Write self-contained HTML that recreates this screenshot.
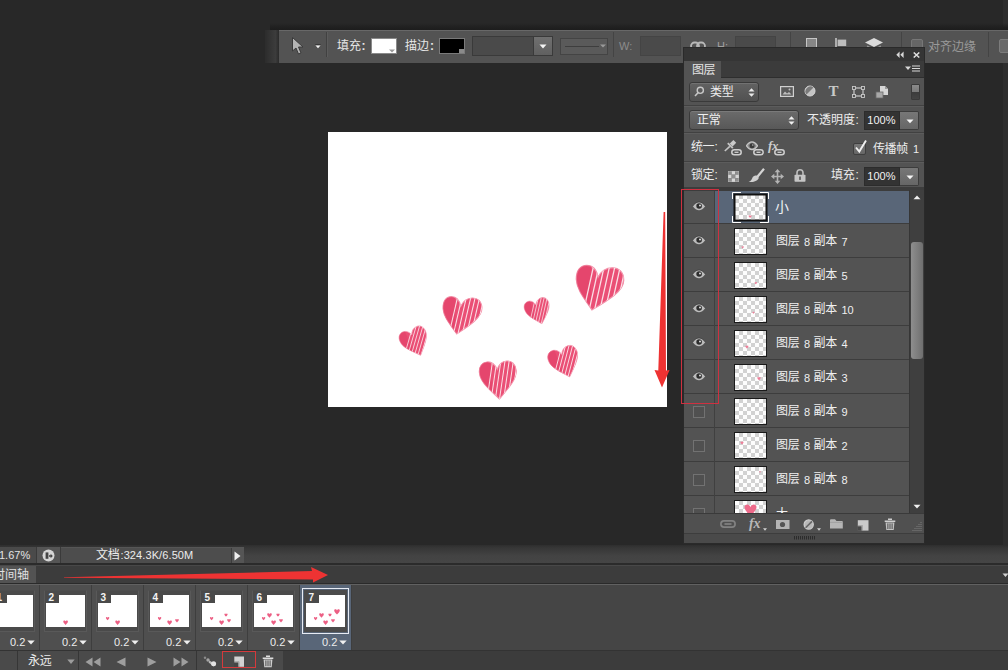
<!DOCTYPE html>
<html lang="zh"><head><meta charset="utf-8"><title>Photoshop</title><style>
html,body{margin:0;padding:0}
body{width:1008px;height:670px;overflow:hidden;background:#282828;position:relative;font-family:"Liberation Sans",sans-serif;font-size:11px;color:#dcdcdc}
body div,body>svg,.t,.rows svg,.rows span{position:absolute;box-sizing:border-box}
.t{white-space:nowrap;line-height:1}
.cj{font-family:"Liberation Sans","Noto Sans CJK SC",sans-serif;font-size:12px;line-height:14px}
.rows{overflow:hidden}
</style></head><body>
<div style="left:1003px;top:0px;width:5px;height:546px;background:#2e2e2e"></div>
<div style="left:270px;top:23px;width:738px;height:7px;background:linear-gradient(rgba(30,30,30,0),#1f1f1f 70%,#1d1d1d)"></div>
<div style="left:265px;top:30px;width:14px;height:33px;background:linear-gradient(90deg,#2c2c2c 0,#3c3c3c 75%,#2a2a2a 100%)"></div>
<div style="left:279px;top:30px;width:729px;height:33px;background:#535353;border-top:1px solid #686868"></div>
<svg style="left:290px;top:36px" width="15" height="20" viewBox="0 0 15 20" ><path d="M2.5 1.5 L2.5 15 L6 12 L8.5 18 L11 17 L8.5 11 L13 11 Z" fill="#b4b4b4" stroke="#3a3a3a" stroke-width="1"/></svg>
<svg style="left:315px;top:44px" width="6" height="5" viewBox="0 0 6 5" ><path d="M0.3 1.2 L5.7 1.2 L3 4.3 Z" fill="#f4f4f4"/><path d="M0.3 0.7 H5.7" stroke="#333" stroke-width="1"/></svg>
<div style="left:326px;top:32px;width:1px;height:25px;background:#414141"></div>
<div style="left:327px;top:32px;width:1px;height:25px;background:#5c5c5c"></div>
<span class="t cj" style="left:337px;top:39px;color:#e6e6e6">填充</span>
<span class="t" style="left:361.5px;top:40px;font-size:12px;font-weight:bold;color:#e6e6e6">:</span>
<div style="left:371px;top:38px;width:26px;height:16px;background:#fff;border:1px solid #8a8a8a"></div>
<svg style="left:389px;top:49px" width="6" height="4" viewBox="0 0 6 4" ><path d="M0 0.5 H6 L3 3.5 Z" fill="#999"/></svg>
<span class="t cj" style="left:405px;top:39px;color:#e6e6e6">描边</span>
<span class="t" style="left:430px;top:40px;font-size:12px;font-weight:bold;color:#e6e6e6">:</span>
<div style="left:439px;top:38px;width:26px;height:16px;background:#000;border:1px solid #7a7a7a"></div>
<div style="left:459px;top:49px;width:5px;height:4px;background:#8a8a8a"></div>
<div style="left:472px;top:36px;width:62px;height:20px;background:#4a4a4a;border:1px solid #3a3a3a"></div>
<div style="left:533px;top:36px;width:20px;height:20px;background:linear-gradient(#707070,#606060);border:1px solid #3a3a3a"></div>
<svg style="left:539px;top:44px" width="8" height="5" viewBox="0 0 8 5" ><path d="M0.5 0.5 H7.5 L4 4.5 Z" fill="#f4f4f4"/></svg>
<div style="left:560px;top:38px;width:48px;height:17px;background:#5a5a5a;border:1px solid #444"></div>
<div style="left:565px;top:46px;width:34px;height:1px;background:#3e3e3e"></div>
<svg style="left:600px;top:44px" width="6" height="4" viewBox="0 0 6 4" ><path d="M0 0.5 H6 L3 3.5 Z" fill="#999"/></svg>
<div style="left:613px;top:32px;width:1px;height:25px;background:#444"></div>
<span class="t" style="left:619px;top:41px;font-size:11px;color:#8c8c8c">W:</span>
<div style="left:640px;top:36px;width:41px;height:20px;background:#4a4a4a;border:1px solid #444"></div>
<svg style="left:690px;top:40px" width="16" height="12" viewBox="0 0 16 12" ><rect x="1" y="2.5" width="8" height="7" rx="3.5" fill="none" stroke="#b8b8b8" stroke-width="1.8"/><rect x="7" y="2.5" width="8" height="7" rx="3.5" fill="none" stroke="#b8b8b8" stroke-width="1.8"/></svg>
<span class="t" style="left:717px;top:41px;font-size:11px;color:#a0a0a0">H:</span>
<div style="left:735px;top:36px;width:41px;height:20px;background:#4a4a4a;border:1px solid #444"></div>
<div style="left:790px;top:32px;width:1px;height:25px;background:#444"></div>
<div style="left:806px;top:38px;width:11px;height:13px;background:#868686;border:1px solid #c6c6c6"></div>
<svg style="left:835px;top:38px" width="12" height="13" viewBox="0 0 12 13" ><path d="M1 0 V13" stroke="#d4d4d4" stroke-width="1.4"/><rect x="2.6" y="1.6" width="8.6" height="6.4" fill="#bdbdbd"/></svg>
<svg style="left:864px;top:38px" width="20" height="12" viewBox="0 0 20 12" ><path d="M10 0 L19 4.5 L10 9 L1 4.5 Z" fill="#dadada"/><path d="M3 8 L10 11.5 L17 8" fill="none" stroke="#999" stroke-width="1.2"/></svg>
<div style="left:901px;top:32px;width:1px;height:25px;background:#444"></div>
<div style="left:911px;top:39px;width:12px;height:12px;background:#666;border:1px solid #777;border-radius:2px"></div>
<span class="t cj" style="left:928px;top:40px;color:#9a9a9a">对齐边缘</span>
<div style="left:988px;top:32px;width:1px;height:25px;background:#444"></div>
<div style="left:999px;top:39px;width:12px;height:14px;background:#6a6a6a;border:1px solid #7c7c7c;border-radius:2px"></div>
<div style="left:328px;top:132px;width:339px;height:275px;background:#fff"></div>
<svg style="left:328px;top:132px" width="339" height="275" viewBox="328 132 339 275" ><g transform="translate(415.3,342) rotate(-24) scale(0.275,0.316667) translate(-50,-45)"><clipPath id="hca"><path d="M48 90 C22 64 0 46 0 24 C0 8 11 0 23 0 C36 0 45 9 49 20 C54 9 64 2 77 2 C90 2 100 11 100 26 C100 46 78 64 48 90 Z"/></clipPath><path d="M48 90 C22 64 0 46 0 24 C0 8 11 0 23 0 C36 0 45 9 49 20 C54 9 64 2 77 2 C90 2 100 11 100 26 C100 46 78 64 48 90 Z" fill="#ea4f75" stroke="#f391a9" stroke-width="2.5"/><g clip-path="url(#hca)"><rect x="-5" y="-5" width="36" height="100" fill="#e03c64" opacity="0.45"/><g transform="rotate(44 50 45)"><path d="M27 -40 V140" stroke="#fff" stroke-opacity="0.82" stroke-width="2.7"/><path d="M38 -40 V140" stroke="#fff" stroke-opacity="0.82" stroke-width="2.7"/><path d="M49 -40 V140" stroke="#fff" stroke-opacity="0.82" stroke-width="2.7"/><path d="M60 -40 V140" stroke="#fff" stroke-opacity="0.82" stroke-width="2.7"/><path d="M71 -40 V140" stroke="#fff" stroke-opacity="0.82" stroke-width="2.7"/><path d="M82 -40 V140" stroke="#fff" stroke-opacity="0.82" stroke-width="2.7"/><path d="M93 -40 V140" stroke="#fff" stroke-opacity="0.82" stroke-width="2.7"/><path d="M104 -40 V140" stroke="#fff" stroke-opacity="0.82" stroke-width="2.7"/><path d="M115 -40 V140" stroke="#fff" stroke-opacity="0.82" stroke-width="2.7"/><path d="M126 -40 V140" stroke="#fff" stroke-opacity="0.82" stroke-width="2.7"/><path d="M137 -40 V140" stroke="#fff" stroke-opacity="0.82" stroke-width="2.7"/><path d="M148 -40 V140" stroke="#fff" stroke-opacity="0.82" stroke-width="2.7"/></g></g></g><g transform="translate(462.7,315) rotate(-2) scale(0.39,0.416667) translate(-50,-45)"><clipPath id="hcb"><path d="M33 90 C18 68 1 50 0 28 C0 10 9 0 22 0 C34 0 43 9 46 24 C52 12 63 5 76 5 C90 5 100 14 100 30 C100 52 68 70 33 90 Z"/></clipPath><path d="M33 90 C18 68 1 50 0 28 C0 10 9 0 22 0 C34 0 43 9 46 24 C52 12 63 5 76 5 C90 5 100 14 100 30 C100 52 68 70 33 90 Z" fill="#ea4f75" stroke="#f391a9" stroke-width="2.5"/><g clip-path="url(#hcb)"><rect x="-5" y="-5" width="36" height="100" fill="#e03c64" opacity="0.45"/><g transform="rotate(16 50 45)"><path d="M27 -40 V140" stroke="#fff" stroke-opacity="0.82" stroke-width="2.7"/><path d="M38 -40 V140" stroke="#fff" stroke-opacity="0.82" stroke-width="2.7"/><path d="M49 -40 V140" stroke="#fff" stroke-opacity="0.82" stroke-width="2.7"/><path d="M60 -40 V140" stroke="#fff" stroke-opacity="0.82" stroke-width="2.7"/><path d="M71 -40 V140" stroke="#fff" stroke-opacity="0.82" stroke-width="2.7"/><path d="M82 -40 V140" stroke="#fff" stroke-opacity="0.82" stroke-width="2.7"/><path d="M93 -40 V140" stroke="#fff" stroke-opacity="0.82" stroke-width="2.7"/><path d="M104 -40 V140" stroke="#fff" stroke-opacity="0.82" stroke-width="2.7"/><path d="M115 -40 V140" stroke="#fff" stroke-opacity="0.82" stroke-width="2.7"/><path d="M126 -40 V140" stroke="#fff" stroke-opacity="0.82" stroke-width="2.7"/><path d="M137 -40 V140" stroke="#fff" stroke-opacity="0.82" stroke-width="2.7"/><path d="M148 -40 V140" stroke="#fff" stroke-opacity="0.82" stroke-width="2.7"/></g></g></g><g transform="translate(538.4,311.5) rotate(-18) scale(0.25,0.283333) translate(-50,-45)"><clipPath id="hcc"><path d="M48 90 C22 64 0 46 0 24 C0 8 11 0 23 0 C36 0 45 9 49 20 C54 9 64 2 77 2 C90 2 100 11 100 26 C100 46 78 64 48 90 Z"/></clipPath><path d="M48 90 C22 64 0 46 0 24 C0 8 11 0 23 0 C36 0 45 9 49 20 C54 9 64 2 77 2 C90 2 100 11 100 26 C100 46 78 64 48 90 Z" fill="#ea4f75" stroke="#f391a9" stroke-width="2.5"/><g clip-path="url(#hcc)"><rect x="-5" y="-5" width="36" height="100" fill="#e03c64" opacity="0.45"/><g transform="rotate(34 50 45)"><path d="M27 -40 V140" stroke="#fff" stroke-opacity="0.82" stroke-width="2.7"/><path d="M38 -40 V140" stroke="#fff" stroke-opacity="0.82" stroke-width="2.7"/><path d="M49 -40 V140" stroke="#fff" stroke-opacity="0.82" stroke-width="2.7"/><path d="M60 -40 V140" stroke="#fff" stroke-opacity="0.82" stroke-width="2.7"/><path d="M71 -40 V140" stroke="#fff" stroke-opacity="0.82" stroke-width="2.7"/><path d="M82 -40 V140" stroke="#fff" stroke-opacity="0.82" stroke-width="2.7"/><path d="M93 -40 V140" stroke="#fff" stroke-opacity="0.82" stroke-width="2.7"/><path d="M104 -40 V140" stroke="#fff" stroke-opacity="0.82" stroke-width="2.7"/><path d="M115 -40 V140" stroke="#fff" stroke-opacity="0.82" stroke-width="2.7"/><path d="M126 -40 V140" stroke="#fff" stroke-opacity="0.82" stroke-width="2.7"/><path d="M137 -40 V140" stroke="#fff" stroke-opacity="0.82" stroke-width="2.7"/><path d="M148 -40 V140" stroke="#fff" stroke-opacity="0.82" stroke-width="2.7"/></g></g></g><g transform="translate(600,287.6) rotate(0) scale(0.475,0.494444) translate(-50,-45)"><clipPath id="hcd"><path d="M33 90 C18 68 1 50 0 28 C0 10 9 0 22 0 C34 0 43 9 46 24 C52 12 63 5 76 5 C90 5 100 14 100 30 C100 52 68 70 33 90 Z"/></clipPath><path d="M33 90 C18 68 1 50 0 28 C0 10 9 0 22 0 C34 0 43 9 46 24 C52 12 63 5 76 5 C90 5 100 14 100 30 C100 52 68 70 33 90 Z" fill="#ea4f75" stroke="#f391a9" stroke-width="2.5"/><g clip-path="url(#hcd)"><rect x="-5" y="-5" width="36" height="100" fill="#e03c64" opacity="0.45"/><g transform="rotate(13 50 45)"><path d="M27 -40 V140" stroke="#fff" stroke-opacity="0.82" stroke-width="2.7"/><path d="M38 -40 V140" stroke="#fff" stroke-opacity="0.82" stroke-width="2.7"/><path d="M49 -40 V140" stroke="#fff" stroke-opacity="0.82" stroke-width="2.7"/><path d="M60 -40 V140" stroke="#fff" stroke-opacity="0.82" stroke-width="2.7"/><path d="M71 -40 V140" stroke="#fff" stroke-opacity="0.82" stroke-width="2.7"/><path d="M82 -40 V140" stroke="#fff" stroke-opacity="0.82" stroke-width="2.7"/><path d="M93 -40 V140" stroke="#fff" stroke-opacity="0.82" stroke-width="2.7"/><path d="M104 -40 V140" stroke="#fff" stroke-opacity="0.82" stroke-width="2.7"/><path d="M115 -40 V140" stroke="#fff" stroke-opacity="0.82" stroke-width="2.7"/><path d="M126 -40 V140" stroke="#fff" stroke-opacity="0.82" stroke-width="2.7"/><path d="M137 -40 V140" stroke="#fff" stroke-opacity="0.82" stroke-width="2.7"/><path d="M148 -40 V140" stroke="#fff" stroke-opacity="0.82" stroke-width="2.7"/></g></g></g><g transform="translate(498.5,380) rotate(-5) scale(0.37,0.422222) translate(-50,-45)"><clipPath id="hce"><path d="M48 90 C22 64 0 46 0 24 C0 8 11 0 23 0 C36 0 45 9 49 20 C54 9 64 2 77 2 C90 2 100 11 100 26 C100 46 78 64 48 90 Z"/></clipPath><path d="M48 90 C22 64 0 46 0 24 C0 8 11 0 23 0 C36 0 45 9 49 20 C54 9 64 2 77 2 C90 2 100 11 100 26 C100 46 78 64 48 90 Z" fill="#ea4f75" stroke="#f391a9" stroke-width="2.5"/><g clip-path="url(#hce)"><rect x="-5" y="-5" width="36" height="100" fill="#e03c64" opacity="0.45"/><g transform="rotate(15 50 45)"><path d="M27 -40 V140" stroke="#fff" stroke-opacity="0.82" stroke-width="2.7"/><path d="M38 -40 V140" stroke="#fff" stroke-opacity="0.82" stroke-width="2.7"/><path d="M49 -40 V140" stroke="#fff" stroke-opacity="0.82" stroke-width="2.7"/><path d="M60 -40 V140" stroke="#fff" stroke-opacity="0.82" stroke-width="2.7"/><path d="M71 -40 V140" stroke="#fff" stroke-opacity="0.82" stroke-width="2.7"/><path d="M82 -40 V140" stroke="#fff" stroke-opacity="0.82" stroke-width="2.7"/><path d="M93 -40 V140" stroke="#fff" stroke-opacity="0.82" stroke-width="2.7"/><path d="M104 -40 V140" stroke="#fff" stroke-opacity="0.82" stroke-width="2.7"/><path d="M115 -40 V140" stroke="#fff" stroke-opacity="0.82" stroke-width="2.7"/><path d="M126 -40 V140" stroke="#fff" stroke-opacity="0.82" stroke-width="2.7"/><path d="M137 -40 V140" stroke="#fff" stroke-opacity="0.82" stroke-width="2.7"/><path d="M148 -40 V140" stroke="#fff" stroke-opacity="0.82" stroke-width="2.7"/></g></g></g><g transform="translate(565,362.3) rotate(-20) scale(0.3,0.338889) translate(-50,-45)"><clipPath id="hcf"><path d="M48 90 C22 64 0 46 0 24 C0 8 11 0 23 0 C36 0 45 9 49 20 C54 9 64 2 77 2 C90 2 100 11 100 26 C100 46 78 64 48 90 Z"/></clipPath><path d="M48 90 C22 64 0 46 0 24 C0 8 11 0 23 0 C36 0 45 9 49 20 C54 9 64 2 77 2 C90 2 100 11 100 26 C100 46 78 64 48 90 Z" fill="#ea4f75" stroke="#f391a9" stroke-width="2.5"/><g clip-path="url(#hcf)"><rect x="-5" y="-5" width="36" height="100" fill="#e03c64" opacity="0.45"/><g transform="rotate(38 50 45)"><path d="M27 -40 V140" stroke="#fff" stroke-opacity="0.82" stroke-width="2.7"/><path d="M38 -40 V140" stroke="#fff" stroke-opacity="0.82" stroke-width="2.7"/><path d="M49 -40 V140" stroke="#fff" stroke-opacity="0.82" stroke-width="2.7"/><path d="M60 -40 V140" stroke="#fff" stroke-opacity="0.82" stroke-width="2.7"/><path d="M71 -40 V140" stroke="#fff" stroke-opacity="0.82" stroke-width="2.7"/><path d="M82 -40 V140" stroke="#fff" stroke-opacity="0.82" stroke-width="2.7"/><path d="M93 -40 V140" stroke="#fff" stroke-opacity="0.82" stroke-width="2.7"/><path d="M104 -40 V140" stroke="#fff" stroke-opacity="0.82" stroke-width="2.7"/><path d="M115 -40 V140" stroke="#fff" stroke-opacity="0.82" stroke-width="2.7"/><path d="M126 -40 V140" stroke="#fff" stroke-opacity="0.82" stroke-width="2.7"/><path d="M137 -40 V140" stroke="#fff" stroke-opacity="0.82" stroke-width="2.7"/><path d="M148 -40 V140" stroke="#fff" stroke-opacity="0.82" stroke-width="2.7"/></g></g></g></svg>
<svg style="left:650px;top:208px" width="24" height="184" viewBox="0 0 24 184" ><path d="M13.6 4 L15.2 4 L16 162.5 L19.6 162 L12 179.5 L4.5 162 L8.3 162.5 Z" fill="#ee3232"/></svg>
<div style="left:683px;top:47px;width:242px;height:497px;background:#535353;border:1px solid #2a2a2a"></div>
<div style="left:684px;top:48px;width:240px;height:13px;background:#353535"></div>
<div style="left:684px;top:61px;width:240px;height:17px;background:#3b3b3b;border-bottom:1px solid #2e2e2e"></div>
<div style="left:684px;top:61px;width:37px;height:18px;background:#535353"></div>
<svg style="left:896px;top:51px" width="8" height="8" viewBox="0 0 8 8" ><path d="M3.6 0.5 V7 L0.3 3.75 Z M7.6 0.5 V7 L4.3 3.75 Z" fill="#d8d8d8"/></svg>
<svg style="left:913px;top:52px" width="7" height="6" viewBox="0 0 7 6" ><path d="M0.7 0.5 L6.3 5.5 M6.3 0.5 L0.7 5.5" stroke="#e0e0e0" stroke-width="1.5"/></svg>
<span class="t cj" style="left:692px;top:63px;color:#e4e4e4;letter-spacing:-0.5px">图层</span>
<svg style="left:905px;top:65px" width="16" height="8" viewBox="0 0 16 8" ><path d="M0 1.5 H6 L3 5 Z" fill="#d8d8d8"/><path d="M7 1 H15 M7 3.5 H15 M7 6 H15" stroke="#d8d8d8" stroke-width="1.2"/></svg>
<div style="left:689px;top:82px;width:70px;height:20px;background:linear-gradient(#626262,#515151);border:1px solid #3a3a3a;border-radius:3px;box-shadow:inset 0 1px 0 #727272"></div>
<svg style="left:694px;top:86px" width="11" height="11" viewBox="0 0 11 11" ><circle cx="6.3" cy="4.3" r="3.1" fill="none" stroke="#c8c8c8" stroke-width="1.4"/><path d="M4 6.8 L1 10" stroke="#c8c8c8" stroke-width="1.6"/></svg>
<span class="t cj" style="left:710px;top:85px;color:#ececec;letter-spacing:-0.3px">类型</span>
<svg style="left:748px;top:88px" width="7" height="9" viewBox="0 0 7 9" ><path d="M3.5 0.3 L6.5 3.6 H0.5 Z M3.5 8.7 L6.5 5.4 H0.5 Z" fill="#e8e8e8"/></svg>
<svg style="left:780px;top:86px" width="14" height="11" viewBox="0 0 14 11" ><rect x="0.6" y="0.6" width="12.8" height="9.8" fill="#5a5a5a" stroke="#d0d0d0" stroke-width="1.2"/><path d="M2.5 8.5 L5 5.5 L7 7.5 L9 6 L11.5 8.5 Z" fill="#bdbdbd"/><circle cx="9.5" cy="3.5" r="1" fill="#bdbdbd"/></svg>
<svg style="left:804px;top:85px" width="12" height="12" viewBox="0 0 12 12" ><circle cx="6" cy="6" r="5" fill="#c4c4c4" stroke="#d8d8d8" stroke-width="1"/><path d="M2.5 9.5 A5 5 0 0 1 9.5 2.5 Z" fill="#7a7a7a"/></svg>
<span class="t" style="left:828.5px;top:84px;font-family:'Liberation Serif',serif;font-weight:bold;font-size:15px;color:#c9c9c9">T</span>
<svg style="left:852px;top:86px" width="13" height="12" viewBox="0 0 13 12" ><rect x="2" y="2" width="9" height="8" fill="none" stroke="#c8c8c8" stroke-width="1.2"/><g fill="#535353" stroke="#c8c8c8" stroke-width="0.9"><rect x="0.5" y="0.5" width="3" height="3"/><rect x="9.5" y="0.5" width="3" height="3"/><rect x="0.5" y="8.5" width="3" height="3"/><rect x="9.5" y="8.5" width="3" height="3"/></g></svg>
<svg style="left:875px;top:85px" width="14" height="14" viewBox="0 0 14 14" ><path d="M5 1 H10 L13 4 V10 H5 Z" fill="#d6d6d6"/><path d="M10 1 V4 H13" fill="#9a9a9a"/><rect x="1" y="7" width="7" height="6" fill="#a8a8a8" stroke="#6a6a6a" stroke-width="0.8"/></svg>
<div style="left:911px;top:84px;width:9px;height:16px;background:linear-gradient(#8a8a8a 0,#7a7a7a 48%,#3c3c3c 52%,#444 100%);border:1px solid #3a3a3a;border-radius:1px"></div>
<div style="left:684px;top:105px;width:240px;height:1px;background:#414141"></div>
<div style="left:684px;top:106px;width:240px;height:1px;background:#5c5c5c"></div>
<div style="left:689px;top:110px;width:110px;height:20px;background:linear-gradient(#6b6b6b,#585858);border:1px solid #3a3a3a;border-radius:3px;box-shadow:inset 0 1px 0 #7a7a7a"></div>
<span class="t cj" style="left:697px;top:113px;color:#f0f0f0;letter-spacing:-0.3px">正常</span>
<svg style="left:788px;top:116px" width="7" height="9" viewBox="0 0 7 9" ><path d="M3.5 0.3 L6.5 3.6 H0.5 Z M3.5 8.7 L6.5 5.4 H0.5 Z" fill="#f0f0f0"/></svg>
<span class="t cj" style="left:807px;top:113px;color:#ececec">不透明度</span>
<span class="t" style="left:855.5px;top:114px;font-size:12px;color:#ececec">:</span>
<div style="left:864px;top:111px;width:36px;height:19px;background:#333;border:1px solid #2c2c2c"></div>
<span class="t" style="left:867.3px;top:115px;font-size:11px;color:#f2f2f2">100%</span>
<div style="left:900px;top:111px;width:19px;height:19px;background:linear-gradient(#777,#666);border:1px solid #3c3c3c;border-left:none;border-radius:0 2px 2px 0"></div>
<svg style="left:906px;top:119px" width="8" height="5" viewBox="0 0 8 5" ><path d="M0.5 0.5 H7.5 L4 4.3 Z" fill="#f6f6f6"/></svg>
<div style="left:684px;top:132px;width:240px;height:1px;background:#414141"></div>
<div style="left:684px;top:133px;width:240px;height:1px;background:#5c5c5c"></div>
<span class="t cj" style="left:691px;top:140px;color:#ececec;letter-spacing:-0.4px">统一</span>
<span class="t" style="left:714.5px;top:141px;font-size:12px;color:#ececec">:</span>
<div style="left:853px;top:143px;width:13px;height:12px;background:linear-gradient(#777,#666);border:1px solid #3f3f3f;border-radius:2px"></div>
<svg style="left:853px;top:139px" width="16" height="16" viewBox="0 0 16 16" ><path d="M3 8.5 L6.3 12.5 L13 1.5" fill="none" stroke="#f2f2f2" stroke-width="1.9"/></svg>
<span class="t cj" style="left:873px;top:142px;color:#ececec;letter-spacing:-0.4px">传播帧</span>
<span class="t" style="left:913px;top:144px;font-size:11px;color:#ececec">1</span>
<div style="left:684px;top:161px;width:240px;height:1px;background:#414141"></div>
<div style="left:684px;top:162px;width:240px;height:1px;background:#5c5c5c"></div>
<span class="t cj" style="left:691px;top:168px;color:#ececec;letter-spacing:-0.4px">锁定</span>
<span class="t" style="left:714.5px;top:169px;font-size:12px;color:#ececec">:</span>
<span class="t cj" style="left:831px;top:168px;color:#ececec;letter-spacing:-0.3px">填充</span>
<span class="t" style="left:855.5px;top:169px;font-size:12px;color:#ececec">:</span>
<div style="left:864px;top:167px;width:36px;height:19px;background:#333;border:1px solid #2c2c2c"></div>
<span class="t" style="left:867.3px;top:171px;font-size:11px;color:#f2f2f2">100%</span>
<div style="left:900px;top:167px;width:19px;height:19px;background:linear-gradient(#777,#666);border:1px solid #3c3c3c;border-left:none;border-radius:0 2px 2px 0"></div>
<svg style="left:906px;top:175px" width="8" height="5" viewBox="0 0 8 5" ><path d="M0.5 0.5 H7.5 L4 4.3 Z" fill="#f6f6f6"/></svg>
<div class="rows" style="left:684px;top:190px;width:225px;height:323px;"><div style="left:0;top:0px;width:225px;height:34px;border-bottom:1px solid #3d3d3d;background:#535353"></div><div style="left:31px;top:0px;width:194px;height:34px;background:#596678;border-bottom:1px solid #3d3d3d"></div><div style="left:30px;top:0px;width:1px;height:34px;background:#404040"></div><svg style="left:8px;top:11px" width="14" height="10" viewBox="0 0 14 10"><path d="M0.8 5.2 Q3.6 1.2 7 1.2 Q10.4 1.2 13.2 5.2 Q10.4 9.2 7 9.2 Q3.6 9.2 0.8 5.2 Z" fill="#bcbcbc"/><path d="M0.8 5 Q3.6 0.8 7 0.8 Q10.4 0.8 13.2 5" fill="none" stroke="#3a3a3a" stroke-width="0.8" opacity="0.7"/><circle cx="7.1" cy="5" r="2.8" fill="#2e2e2e"/><circle cx="8" cy="4.4" r="1" fill="#e0e0e0"/></svg><div style="left:50px;top:4px;width:33px;height:27px;border:1px solid #1a1a1a;background-color:#fdfdfd;background-image:linear-gradient(45deg,#d2d2d2 25%,transparent 25%,transparent 75%,#d2d2d2 75%),linear-gradient(45deg,#d2d2d2 25%,transparent 25%,transparent 75%,#d2d2d2 75%);background-size:8px 8px;background-position:0 0,4px 4px"></div><svg style="left:51px;top:5px" width="31" height="25" viewBox="0 0 31 25"><path d="M15.1 23.1 C14.05 22.05 13.6 21.45 13.6 20.85 C13.6 20.025 14.875 19.95 15.1 20.925 C15.325 19.95 16.6 20.025 16.6 20.85 C16.6 21.45 16.15 22.05 15.1 23.1 Z" fill="#ee7d98" opacity="1"/></svg><svg style="left:48px;top:2px" width="37" height="31" viewBox="0 0 37 31"><path d="M0.5 7 V0.5 H9 M28 0.5 H36.5 V7 M36.5 24 V30.5 H28 M9 30.5 H0.5 V24" fill="none" stroke="#fff" stroke-width="1"/><rect x="2.5" y="2.5" width="32" height="26" fill="none" stroke="#111" stroke-width="2"/></svg><span class="t cj" style="left:91px;top:9px;font-size:14px;line-height:16px;color:#eef0f4">小</span><div style="left:0;top:34px;width:225px;height:34px;border-bottom:1px solid #3d3d3d;background:#535353"></div><div style="left:30px;top:34px;width:1px;height:34px;background:#404040"></div><svg style="left:8px;top:45px" width="14" height="10" viewBox="0 0 14 10"><path d="M0.8 5.2 Q3.6 1.2 7 1.2 Q10.4 1.2 13.2 5.2 Q10.4 9.2 7 9.2 Q3.6 9.2 0.8 5.2 Z" fill="#bcbcbc"/><path d="M0.8 5 Q3.6 0.8 7 0.8 Q10.4 0.8 13.2 5" fill="none" stroke="#3a3a3a" stroke-width="0.8" opacity="0.7"/><circle cx="7.1" cy="5" r="2.8" fill="#2e2e2e"/><circle cx="8" cy="4.4" r="1" fill="#e0e0e0"/></svg><div style="left:50px;top:38px;width:33px;height:27px;border:1px solid #1a1a1a;background-color:#fdfdfd;background-image:linear-gradient(45deg,#d2d2d2 25%,transparent 25%,transparent 75%,#d2d2d2 75%),linear-gradient(45deg,#d2d2d2 25%,transparent 25%,transparent 75%,#d2d2d2 75%);background-size:8px 8px;background-position:0 0,4px 4px"></div><svg style="left:51px;top:39px" width="31" height="25" viewBox="0 0 31 25"><path d="M7.7 19.4 C6.93 18.63 6.6 18.19 6.6 17.75 C6.6 17.145 7.535 17.09 7.7 17.805 C7.865 17.09 8.8 17.145 8.8 17.75 C8.8 18.19 8.47 18.63 7.7 19.4 Z" fill="#ee7d98" opacity="1"/></svg><span class="t cj" style="left:92px;top:44px;color:#f0f0f0;letter-spacing:-0.2px">图层</span><span class="t" style="left:120px;top:47px;font-size:11px;color:#f0f0f0">8</span><span class="t cj" style="left:129.5px;top:44px;color:#f0f0f0;letter-spacing:-0.2px">副本</span><span class="t" style="left:157.5px;top:47px;font-size:11px;color:#f0f0f0">7</span><div style="left:0;top:68px;width:225px;height:34px;border-bottom:1px solid #3d3d3d;background:#535353"></div><div style="left:30px;top:68px;width:1px;height:34px;background:#404040"></div><svg style="left:8px;top:79px" width="14" height="10" viewBox="0 0 14 10"><path d="M0.8 5.2 Q3.6 1.2 7 1.2 Q10.4 1.2 13.2 5.2 Q10.4 9.2 7 9.2 Q3.6 9.2 0.8 5.2 Z" fill="#bcbcbc"/><path d="M0.8 5 Q3.6 0.8 7 0.8 Q10.4 0.8 13.2 5" fill="none" stroke="#3a3a3a" stroke-width="0.8" opacity="0.7"/><circle cx="7.1" cy="5" r="2.8" fill="#2e2e2e"/><circle cx="8" cy="4.4" r="1" fill="#e0e0e0"/></svg><div style="left:50px;top:72px;width:33px;height:27px;border:1px solid #1a1a1a;background-color:#fdfdfd;background-image:linear-gradient(45deg,#d2d2d2 25%,transparent 25%,transparent 75%,#d2d2d2 75%),linear-gradient(45deg,#d2d2d2 25%,transparent 25%,transparent 75%,#d2d2d2 75%);background-size:8px 8px;background-position:0 0,4px 4px"></div><svg style="left:51px;top:73px" width="31" height="25" viewBox="0 0 31 25"><path d="M20.8 21.2 C19.96 20.36 19.6 19.88 19.6 19.4 C19.6 18.74 20.62 18.68 20.8 19.46 C20.98 18.68 22 18.74 22 19.4 C22 19.88 21.64 20.36 20.8 21.2 Z" fill="#ee7d98" opacity="1"/></svg><span class="t cj" style="left:92px;top:78px;color:#f0f0f0;letter-spacing:-0.2px">图层</span><span class="t" style="left:120px;top:81px;font-size:11px;color:#f0f0f0">8</span><span class="t cj" style="left:129.5px;top:78px;color:#f0f0f0;letter-spacing:-0.2px">副本</span><span class="t" style="left:157.5px;top:81px;font-size:11px;color:#f0f0f0">5</span><div style="left:0;top:102px;width:225px;height:34px;border-bottom:1px solid #3d3d3d;background:#535353"></div><div style="left:30px;top:102px;width:1px;height:34px;background:#404040"></div><svg style="left:8px;top:113px" width="14" height="10" viewBox="0 0 14 10"><path d="M0.8 5.2 Q3.6 1.2 7 1.2 Q10.4 1.2 13.2 5.2 Q10.4 9.2 7 9.2 Q3.6 9.2 0.8 5.2 Z" fill="#bcbcbc"/><path d="M0.8 5 Q3.6 0.8 7 0.8 Q10.4 0.8 13.2 5" fill="none" stroke="#3a3a3a" stroke-width="0.8" opacity="0.7"/><circle cx="7.1" cy="5" r="2.8" fill="#2e2e2e"/><circle cx="8" cy="4.4" r="1" fill="#e0e0e0"/></svg><div style="left:50px;top:106px;width:33px;height:27px;border:1px solid #1a1a1a;background-color:#fdfdfd;background-image:linear-gradient(45deg,#d2d2d2 25%,transparent 25%,transparent 75%,#d2d2d2 75%),linear-gradient(45deg,#d2d2d2 25%,transparent 25%,transparent 75%,#d2d2d2 75%);background-size:8px 8px;background-position:0 0,4px 4px"></div><svg style="left:51px;top:107px" width="31" height="25" viewBox="0 0 31 25"><path d="M18.5 16.7 C17.8 16 17.5 15.6 17.5 15.2 C17.5 14.65 18.35 14.6 18.5 15.25 C18.65 14.6 19.5 14.65 19.5 15.2 C19.5 15.6 19.2 16 18.5 16.7 Z" fill="#ee7d98" opacity="1"/></svg><span class="t cj" style="left:92px;top:112px;color:#f0f0f0;letter-spacing:-0.2px">图层</span><span class="t" style="left:120px;top:115px;font-size:11px;color:#f0f0f0">8</span><span class="t cj" style="left:129.5px;top:112px;color:#f0f0f0;letter-spacing:-0.2px">副本</span><span class="t" style="left:157.5px;top:115px;font-size:11px;color:#f0f0f0">10</span><div style="left:0;top:136px;width:225px;height:34px;border-bottom:1px solid #3d3d3d;background:#535353"></div><div style="left:30px;top:136px;width:1px;height:34px;background:#404040"></div><svg style="left:8px;top:147px" width="14" height="10" viewBox="0 0 14 10"><path d="M0.8 5.2 Q3.6 1.2 7 1.2 Q10.4 1.2 13.2 5.2 Q10.4 9.2 7 9.2 Q3.6 9.2 0.8 5.2 Z" fill="#bcbcbc"/><path d="M0.8 5 Q3.6 0.8 7 0.8 Q10.4 0.8 13.2 5" fill="none" stroke="#3a3a3a" stroke-width="0.8" opacity="0.7"/><circle cx="7.1" cy="5" r="2.8" fill="#2e2e2e"/><circle cx="8" cy="4.4" r="1" fill="#e0e0e0"/></svg><div style="left:50px;top:140px;width:33px;height:27px;border:1px solid #1a1a1a;background-color:#fdfdfd;background-image:linear-gradient(45deg,#d2d2d2 25%,transparent 25%,transparent 75%,#d2d2d2 75%),linear-gradient(45deg,#d2d2d2 25%,transparent 25%,transparent 75%,#d2d2d2 75%);background-size:8px 8px;background-position:0 0,4px 4px"></div><svg style="left:51px;top:141px" width="31" height="25" viewBox="0 0 31 25"><path d="M11.9 17.5 C10.85 16.45 10.4 15.85 10.4 15.25 C10.4 14.425 11.675 14.35 11.9 15.325 C12.125 14.35 13.4 14.425 13.4 15.25 C13.4 15.85 12.95 16.45 11.9 17.5 Z" fill="#ee7d98" opacity="1"/></svg><span class="t cj" style="left:92px;top:146px;color:#f0f0f0;letter-spacing:-0.2px">图层</span><span class="t" style="left:120px;top:149px;font-size:11px;color:#f0f0f0">8</span><span class="t cj" style="left:129.5px;top:146px;color:#f0f0f0;letter-spacing:-0.2px">副本</span><span class="t" style="left:157.5px;top:149px;font-size:11px;color:#f0f0f0">4</span><div style="left:0;top:170px;width:225px;height:34px;border-bottom:1px solid #3d3d3d;background:#535353"></div><div style="left:30px;top:170px;width:1px;height:34px;background:#404040"></div><svg style="left:8px;top:181px" width="14" height="10" viewBox="0 0 14 10"><path d="M0.8 5.2 Q3.6 1.2 7 1.2 Q10.4 1.2 13.2 5.2 Q10.4 9.2 7 9.2 Q3.6 9.2 0.8 5.2 Z" fill="#bcbcbc"/><path d="M0.8 5 Q3.6 0.8 7 0.8 Q10.4 0.8 13.2 5" fill="none" stroke="#3a3a3a" stroke-width="0.8" opacity="0.7"/><circle cx="7.1" cy="5" r="2.8" fill="#2e2e2e"/><circle cx="8" cy="4.4" r="1" fill="#e0e0e0"/></svg><div style="left:50px;top:174px;width:33px;height:27px;border:1px solid #1a1a1a;background-color:#fdfdfd;background-image:linear-gradient(45deg,#d2d2d2 25%,transparent 25%,transparent 75%,#d2d2d2 75%),linear-gradient(45deg,#d2d2d2 25%,transparent 25%,transparent 75%,#d2d2d2 75%);background-size:8px 8px;background-position:0 0,4px 4px"></div><svg style="left:51px;top:175px" width="31" height="25" viewBox="0 0 31 25"><path d="M24 15.3 C22.81 14.11 22.3 13.43 22.3 12.75 C22.3 11.815 23.745 11.73 24 12.835 C24.255 11.73 25.7 11.815 25.7 12.75 C25.7 13.43 25.19 14.11 24 15.3 Z" fill="#ee7d98" opacity="1"/></svg><span class="t cj" style="left:92px;top:180px;color:#f0f0f0;letter-spacing:-0.2px">图层</span><span class="t" style="left:120px;top:183px;font-size:11px;color:#f0f0f0">8</span><span class="t cj" style="left:129.5px;top:180px;color:#f0f0f0;letter-spacing:-0.2px">副本</span><span class="t" style="left:157.5px;top:183px;font-size:11px;color:#f0f0f0">3</span><div style="left:0;top:204px;width:225px;height:34px;border-bottom:1px solid #3d3d3d;background:#535353"></div><div style="left:30px;top:204px;width:1px;height:34px;background:#404040"></div><div style="left:9px;top:216px;width:12px;height:12px;border:1px solid #727272;background:#505050"></div><div style="left:50px;top:208px;width:33px;height:27px;border:1px solid #1a1a1a;background-color:#fdfdfd;background-image:linear-gradient(45deg,#d2d2d2 25%,transparent 25%,transparent 75%,#d2d2d2 75%),linear-gradient(45deg,#d2d2d2 25%,transparent 25%,transparent 75%,#d2d2d2 75%);background-size:8px 8px;background-position:0 0,4px 4px"></div><span class="t cj" style="left:92px;top:214px;color:#f0f0f0;letter-spacing:-0.2px">图层</span><span class="t" style="left:120px;top:217px;font-size:11px;color:#f0f0f0">8</span><span class="t cj" style="left:129.5px;top:214px;color:#f0f0f0;letter-spacing:-0.2px">副本</span><span class="t" style="left:157.5px;top:217px;font-size:11px;color:#f0f0f0">9</span><div style="left:0;top:238px;width:225px;height:34px;border-bottom:1px solid #3d3d3d;background:#535353"></div><div style="left:30px;top:238px;width:1px;height:34px;background:#404040"></div><div style="left:9px;top:250px;width:12px;height:12px;border:1px solid #727272;background:#505050"></div><div style="left:50px;top:242px;width:33px;height:27px;border:1px solid #1a1a1a;background-color:#fdfdfd;background-image:linear-gradient(45deg,#d2d2d2 25%,transparent 25%,transparent 75%,#d2d2d2 75%),linear-gradient(45deg,#d2d2d2 25%,transparent 25%,transparent 75%,#d2d2d2 75%);background-size:8px 8px;background-position:0 0,4px 4px"></div><svg style="left:51px;top:243px" width="31" height="25" viewBox="0 0 31 25"><path d="M7 11.5 C5.95 10.45 5.5 9.85 5.5 9.25 C5.5 8.425 6.775 8.35 7 9.325 C7.225 8.35 8.5 8.425 8.5 9.25 C8.5 9.85 8.05 10.45 7 11.5 Z" fill="#ee7d98" opacity="1"/></svg><span class="t cj" style="left:92px;top:248px;color:#f0f0f0;letter-spacing:-0.2px">图层</span><span class="t" style="left:120px;top:251px;font-size:11px;color:#f0f0f0">8</span><span class="t cj" style="left:129.5px;top:248px;color:#f0f0f0;letter-spacing:-0.2px">副本</span><span class="t" style="left:157.5px;top:251px;font-size:11px;color:#f0f0f0">2</span><div style="left:0;top:272px;width:225px;height:34px;border-bottom:1px solid #3d3d3d;background:#535353"></div><div style="left:30px;top:272px;width:1px;height:34px;background:#404040"></div><div style="left:9px;top:284px;width:12px;height:12px;border:1px solid #727272;background:#505050"></div><div style="left:50px;top:276px;width:33px;height:27px;border:1px solid #1a1a1a;background-color:#fdfdfd;background-image:linear-gradient(45deg,#d2d2d2 25%,transparent 25%,transparent 75%,#d2d2d2 75%),linear-gradient(45deg,#d2d2d2 25%,transparent 25%,transparent 75%,#d2d2d2 75%);background-size:8px 8px;background-position:0 0,4px 4px"></div><svg style="left:51px;top:277px" width="31" height="25" viewBox="0 0 31 25"><path d="M25 5.8 C24.44 5.24 24.2 4.92 24.2 4.6 C24.2 4.16 24.88 4.12 25 4.64 C25.12 4.12 25.8 4.16 25.8 4.6 C25.8 4.92 25.56 5.24 25 5.8 Z" fill="#ee7d98" opacity="1"/></svg><span class="t cj" style="left:92px;top:282px;color:#f0f0f0;letter-spacing:-0.2px">图层</span><span class="t" style="left:120px;top:285px;font-size:11px;color:#f0f0f0">8</span><span class="t cj" style="left:129.5px;top:282px;color:#f0f0f0;letter-spacing:-0.2px">副本</span><span class="t" style="left:157.5px;top:285px;font-size:11px;color:#f0f0f0">8</span><div style="left:0;top:306px;width:225px;height:34px;border-bottom:1px solid #3d3d3d;background:#535353"></div><div style="left:30px;top:306px;width:1px;height:34px;background:#404040"></div><div style="left:9px;top:318px;width:12px;height:12px;border:1px solid #727272;background:#505050"></div><div style="left:50px;top:310px;width:33px;height:27px;border:1px solid #1a1a1a;background-color:#fdfdfd;background-image:linear-gradient(45deg,#d2d2d2 25%,transparent 25%,transparent 75%,#d2d2d2 75%),linear-gradient(45deg,#d2d2d2 25%,transparent 25%,transparent 75%,#d2d2d2 75%);background-size:8px 8px;background-position:0 0,4px 4px"></div><svg style="left:51px;top:311px" width="31" height="25" viewBox="0 0 31 25"><path d="M15.5 15 C11.3 10.8 9.5 8.4 9.5 6 C9.5 2.7 14.6 2.4 15.5 6.3 C16.4 2.4 21.5 2.7 21.5 6 C21.5 8.4 19.7 10.8 15.5 15 Z" fill="#ee6a8a" opacity="1"/></svg><span class="t cj" style="left:92px;top:317px;color:#f0f0f0">大</span></div>
<div style="left:684px;top:187px;width:240px;height:4px;background:#3c3c3c"></div>
<div style="left:909px;top:190px;width:15px;height:323px;background:#3f3f3f;border-left:1px solid #363636"></div>
<svg style="left:913px;top:195px" width="8" height="5" viewBox="0 0 8 5" ><path d="M4 0.5 L7.5 4.3 H0.5 Z" fill="#f0f0f0"/></svg>
<svg style="left:913px;top:504px" width="8" height="5" viewBox="0 0 8 5" ><path d="M4 4.5 L7.5 0.7 H0.5 Z" fill="#f0f0f0"/></svg>
<div style="left:911px;top:242px;width:12px;height:117px;background:linear-gradient(90deg,#8e8e8e,#6f6f6f);border-radius:3px"></div>
<div style="left:684px;top:513px;width:240px;height:1px;background:#3a3a3a"></div>
<div style="left:684px;top:533px;width:240px;height:1px;background:#3d3d3d"></div>
<div style="left:684px;top:534px;width:240px;height:9px;background:#4a4a4a"></div>
<div style="left:681px;top:189px;width:38px;height:215px;border:1px solid #cf3040"></div>
<svg style="left:724px;top:139px" width="13" height="13" viewBox="0 0 13 13" ><path d="M10.8 2.4 L7.2 6" stroke="#cacaca" stroke-width="4"/><path d="M3.8 4.2 L8.8 9.2" stroke="#c4c4c4" stroke-width="1.9"/><path d="M5.8 7.4 L0.8 12" stroke="#c4c4c4" stroke-width="1.6"/></svg>
<svg style="left:730.5px;top:149px" width="11" height="7" viewBox="0 0 11 7" ><rect x="0.8" y="0.8" width="9.4" height="5" rx="2.5" fill="none" stroke="#cfcfcf" stroke-width="1.5"/><path d="M3.5 3.3 H7.5" stroke="#cfcfcf" stroke-width="1.3"/></svg>
<svg style="left:746px;top:141px" width="12" height="10" viewBox="0 0 12 10" ><path d="M0.4 4.8 Q3 0.9 6 0.9 Q9 0.9 11.6 4.8 Q9 8.7 6 8.7 Q3 8.7 0.4 4.8 Z" fill="#8a8a8a" stroke="#c6c6c6" stroke-width="1.3"/><circle cx="6" cy="4.7" r="2.5" fill="#3a3a3a"/><circle cx="6.8" cy="4" r="0.8" fill="#bbb"/></svg>
<svg style="left:752.5px;top:149px" width="11" height="7" viewBox="0 0 11 7" ><rect x="0.8" y="0.8" width="9.4" height="5" rx="2.5" fill="none" stroke="#cfcfcf" stroke-width="1.5"/><path d="M3.5 3.3 H7.5" stroke="#cfcfcf" stroke-width="1.3"/></svg>
<span class="t" style="left:768px;top:138.5px;font-family:'Liberation Serif',serif;font-style:italic;font-weight:bold;font-size:13px;color:#cdcdcd;letter-spacing:-0.3px">fx</span>
<svg style="left:774px;top:149px" width="11" height="7" viewBox="0 0 11 7" ><rect x="0.8" y="0.8" width="9.4" height="5" rx="2.5" fill="none" stroke="#cfcfcf" stroke-width="1.5"/><path d="M3.5 3.3 H7.5" stroke="#cfcfcf" stroke-width="1.3"/></svg>
<svg style="left:728px;top:170.5px" width="11" height="11" viewBox="0 0 11 11" ><rect x="0" y="0" width="3.67" height="3.67" fill="#8f8f8f"/><rect x="3.67" y="0" width="3.67" height="3.67" fill="#d6d6d6"/><rect x="7.34" y="0" width="3.67" height="3.67" fill="#8f8f8f"/><rect x="0" y="3.67" width="3.67" height="3.67" fill="#d6d6d6"/><rect x="3.67" y="3.67" width="3.67" height="3.67" fill="#8f8f8f"/><rect x="7.34" y="3.67" width="3.67" height="3.67" fill="#d6d6d6"/><rect x="0" y="7.34" width="3.67" height="3.67" fill="#8f8f8f"/><rect x="3.67" y="7.34" width="3.67" height="3.67" fill="#d6d6d6"/><rect x="7.34" y="7.34" width="3.67" height="3.67" fill="#8f8f8f"/><rect x="0" y="0" width="11" height="11" fill="none" stroke="#bdbdbd" stroke-width="0.8"/></svg>
<svg style="left:748px;top:168px" width="17" height="15" viewBox="0 0 17 15" ><path d="M16 0.8 L9 9.2" stroke="#d4d4d4" stroke-width="2.2"/><path d="M8.6 7.6 L10.8 9.8 C10 13 5.5 14.6 0.6 13.8 C3 13 3.6 11.8 4.2 10.2 C5 8 7 7 8.6 7.6 Z" fill="#d0d0d0"/></svg>
<svg style="left:771px;top:169px" width="13" height="15" viewBox="0 0 13 15" ><path d="M6.5 0 L9.3 3.3 H7.3 V6.7 H9.7 V4.7 L13 7.5 L9.7 10.3 V8.3 H7.3 V11.7 H9.3 L6.5 15 L3.7 11.7 H5.7 V8.3 H3.3 V10.3 L0 7.5 L3.3 4.7 V6.7 H5.7 V3.3 H3.7 Z" fill="#b4b4b4"/></svg>
<svg style="left:794px;top:169px" width="12" height="13" viewBox="0 0 12 13" ><path d="M3 6 V3.8 A3 3 0 0 1 9 3.8 V6" fill="none" stroke="#bdbdbd" stroke-width="1.6"/><rect x="0.5" y="5.7" width="11" height="7" rx="0.8" fill="#c6c6c6"/><rect x="5.2" y="7.5" width="1.6" height="3.4" fill="#555"/></svg>
<div style="left:684px;top:514px;width:240px;height:19px;background:#505050"></div>
<svg style="left:720px;top:520px" width="16" height="8" viewBox="0 0 16 8" ><rect x="0.9" y="0.9" width="14.2" height="6.2" rx="3.1" fill="none" stroke="#828282" stroke-width="1.7"/><path d="M4.5 4 H11.5" stroke="#828282" stroke-width="1.7"/></svg>
<span class="t" style="left:749px;top:517px;font-family:'Liberation Serif',serif;font-style:italic;font-weight:bold;font-size:14px;color:#b8b8b8;letter-spacing:-0.2px">fx</span>
<svg style="left:763px;top:528px" width="4" height="3" viewBox="0 0 4 3" ><path d="M0 0.3 H4 L2 2.8 Z" fill="#d0d0d0"/></svg>
<svg style="left:776px;top:520px" width="14" height="9" viewBox="0 0 14 9" ><rect x="0" y="0" width="13.5" height="9" fill="#b4b4b4"/><circle cx="6.5" cy="4.5" r="2.6" fill="#555"/></svg>
<svg style="left:803px;top:519px" width="12" height="12" viewBox="0 0 12 12" ><circle cx="5.7" cy="5.5" r="4.6" fill="#b8b8b8" stroke="#cfcfcf" stroke-width="1.2"/><path d="M2.6 8.8 L9 2.4" stroke="#666" stroke-width="1.6"/></svg>
<svg style="left:817px;top:528px" width="4" height="3" viewBox="0 0 4 3" ><path d="M0 0.3 H4 L2 2.8 Z" fill="#d0d0d0"/></svg>
<svg style="left:830px;top:519px" width="13" height="10" viewBox="0 0 13 10" ><path d="M0 1.2 Q0 0.3 1 0.3 H5 L6.5 2 H12 Q12.8 2 12.8 3 V9.6 H0 Z" fill="#b6b6b6"/><path d="M0 3.4 H12.8" stroke="#9a9a9a" stroke-width="0.7"/></svg>
<svg style="left:857px;top:520px" width="12" height="11" viewBox="0 0 12 11" ><path d="M0.8 0.2 H11.5 V10.6 H0.8 Z" fill="#cbcbcb"/><path d="M0.4 5.4 H5.4 V10.8 H0.4 Z" fill="#484848"/><path d="M0.8 5.8 H5 V10.6" fill="none" stroke="#bdbdbd" stroke-width="0.9"/></svg>
<svg style="left:884px;top:518px" width="12" height="13" viewBox="0 0 12 13" ><path d="M4 1.3 H8 M0.7 3.2 H11.3" stroke="#cfcfcf" stroke-width="1.5" fill="none"/><path d="M1.6 4.4 H10.4 L9.7 12 H2.3 Z" fill="#c2c2c2"/><path d="M3.9 5.4 V11 M6 5.4 V11 M8.1 5.4 V11" stroke="#484848" stroke-width="1"/></svg>
<svg style="left:912px;top:522px" width="10" height="10" viewBox="0 0 10 10" ><g fill="#666"><rect x="8" y="0" width="2" height="1"/><rect x="6" y="2" width="4" height="1"/><rect x="4" y="4" width="6" height="1"/><rect x="2" y="6" width="8" height="1"/><rect x="0" y="8" width="10" height="1"/></g></svg>
<svg style="left:794px;top:536px" width="21" height="4" viewBox="0 0 21 4" ><rect x="0" y="0" width="1" height="3.5" fill="#2c2c2c"/><rect x="2" y="0" width="1" height="3.5" fill="#2c2c2c"/><rect x="4" y="0" width="1" height="3.5" fill="#2c2c2c"/><rect x="6" y="0" width="1" height="3.5" fill="#2c2c2c"/><rect x="8" y="0" width="1" height="3.5" fill="#2c2c2c"/><rect x="10" y="0" width="1" height="3.5" fill="#2c2c2c"/><rect x="12" y="0" width="1" height="3.5" fill="#2c2c2c"/><rect x="14" y="0" width="1" height="3.5" fill="#2c2c2c"/><rect x="16" y="0" width="1" height="3.5" fill="#2c2c2c"/><rect x="18" y="0" width="1" height="3.5" fill="#2c2c2c"/><rect x="20" y="0" width="1" height="3.5" fill="#2c2c2c"/></svg>
<div style="left:0px;top:545px;width:1008px;height:18px;background:linear-gradient(#2e2e2e 0,#363636 15%,#434343 60%,#454545 100%)"></div>
<div style="left:0px;top:547px;width:244px;height:16px;background:#4d4d4d;border-top:1px solid #565656"></div>
<div style="left:0px;top:547px;width:36px;height:16px;background:#4a4a4a"></div>
<div style="left:37px;top:547px;width:23px;height:16px;background:#555"></div>
<div style="left:36px;top:547px;width:1px;height:16px;background:#3a3a3a"></div>
<div style="left:60px;top:547px;width:1px;height:16px;background:#3a3a3a"></div>
<div style="left:231px;top:548px;width:13px;height:15px;background:#555;border-left:1px solid #3c3c3c"></div>
<span class="t" style="left:-1px;top:550px;font-size:11px;color:#e4e4e4">1.67%</span>
<svg style="left:42px;top:549px" width="13" height="13" viewBox="0 0 13 13" ><circle cx="6.5" cy="6.5" r="6" fill="#d6d6d6"/><path d="M3.6 3.4 H6.4 V9.8 H3.6 Z" fill="#444"/><path d="M7 6.2 H8.6 V4.8 L10.8 7 L8.6 9.2 V7.8 H7 Z" fill="#444"/></svg>
<span class="t cj" style="left:96px;top:548px;color:#ececec;letter-spacing:-0.2px">文档</span>
<span class="t" style="left:120.5px;top:550px;font-size:11px;color:#ececec;letter-spacing:0.1px">:324.3K/6.50M</span>
<svg style="left:234px;top:551px" width="7" height="10" viewBox="0 0 7 10" ><path d="M0.5 0.5 L6.5 5 L0.5 9.5 Z" fill="#f0f0f0"/></svg>
<div style="left:0px;top:563px;width:1008px;height:2px;background:#2b2b2b"></div>
<div style="left:0px;top:565px;width:1008px;height:18px;background:#3c3c3c;border-top:1px solid #484848"></div>
<div style="left:0px;top:566px;width:36px;height:18px;background:#535353"></div>
<span class="t cj" style="left:-7px;top:568px;color:#e0e0e0">时间轴</span>
<svg style="left:1002px;top:573px" width="7" height="5" viewBox="0 0 7 5" ><path d="M0.5 0.5 H6.5 L3.5 4 Z" fill="#d0d0d0"/></svg>
<div style="left:0px;top:583px;width:1008px;height:1px;background:#2a2a2a"></div>
<div style="left:0px;top:584px;width:1008px;height:66px;background:#454545;border-top:1px solid #616161"></div>
<div style="left:0px;top:650px;width:1008px;height:1px;background:#333"></div>
<div style="left:0px;top:651px;width:1008px;height:19px;background:#3c3c3c"></div>
<div style="left:-13px;top:585px;width:52px;height:65px;background:#4f4f4f"></div>
<div style="left:-13px;top:585px;width:1px;height:65px;background:#3e3e3e"></div>
<div style="left:-8px;top:590px;width:43px;height:42px;background:#4a4a4a;border:1px solid #595959;border-top-color:#4d4d4d"></div>
<div style="left:-6px;top:595px;width:39px;height:32px;background:#fff"></div>
<div style="left:-7px;top:591px;width:14px;height:12px;background:#4a4a4a"></div>
<span class="t" style="left:-3.5px;top:592.5px;font-size:10px;font-weight:bold;color:#f4f4f4">1</span>
<span class="t" style="left:10px;top:637px;font-size:11px;color:#ececec">0.2</span>
<svg style="left:27px;top:640px" width="8" height="5" viewBox="0 0 8 5" ><path d="M0.3 0.5 H7.7 L4 4.5 Z" fill="#f0f0f0"/></svg>
<div style="left:39px;top:585px;width:52px;height:65px;background:#4f4f4f"></div>
<div style="left:39px;top:585px;width:1px;height:65px;background:#3e3e3e"></div>
<div style="left:44px;top:590px;width:43px;height:42px;background:#4a4a4a;border:1px solid #595959;border-top-color:#4d4d4d"></div>
<div style="left:46px;top:595px;width:39px;height:32px;background:#fff"></div>
<svg style="left:46px;top:594px" width="39" height="33" viewBox="0 0 39 33" ><path d="M19.6 30.9 C17.99 29.29 17.3 28.37 17.3 27.45 C17.3 26.185 19.255 26.07 19.6 27.565 C19.945 26.07 21.9 26.185 21.9 27.45 C21.9 28.37 21.21 29.29 19.6 30.9 Z" fill="#ec5f84" opacity="1"/></svg>
<div style="left:45px;top:591px;width:14px;height:12px;background:#4a4a4a"></div>
<span class="t" style="left:48.5px;top:592.5px;font-size:10px;font-weight:bold;color:#f4f4f4">2</span>
<span class="t" style="left:62px;top:637px;font-size:11px;color:#ececec">0.2</span>
<svg style="left:79px;top:640px" width="8" height="5" viewBox="0 0 8 5" ><path d="M0.3 0.5 H7.7 L4 4.5 Z" fill="#f0f0f0"/></svg>
<div style="left:91px;top:585px;width:52px;height:65px;background:#4f4f4f"></div>
<div style="left:91px;top:585px;width:1px;height:65px;background:#3e3e3e"></div>
<div style="left:96px;top:590px;width:43px;height:42px;background:#4a4a4a;border:1px solid #595959;border-top-color:#4d4d4d"></div>
<div style="left:98px;top:595px;width:39px;height:32px;background:#fff"></div>
<svg style="left:98px;top:594px" width="39" height="33" viewBox="0 0 39 33" ><path d="M19.6 30.9 C17.99 29.29 17.3 28.37 17.3 27.45 C17.3 26.185 19.255 26.07 19.6 27.565 C19.945 26.07 21.9 26.185 21.9 27.45 C21.9 28.37 21.21 29.29 19.6 30.9 Z" fill="#ec5f84" opacity="1"/><path d="M9.6 26.3 C8.41 25.11 7.9 24.43 7.9 23.75 C7.9 22.815 9.345 22.73 9.6 23.835 C9.855 22.73 11.3 22.815 11.3 23.75 C11.3 24.43 10.79 25.11 9.6 26.3 Z" fill="#ec5f84" opacity="1"/></svg>
<div style="left:97px;top:591px;width:14px;height:12px;background:#4a4a4a"></div>
<span class="t" style="left:100.5px;top:592.5px;font-size:10px;font-weight:bold;color:#f4f4f4">3</span>
<span class="t" style="left:114px;top:637px;font-size:11px;color:#ececec">0.2</span>
<svg style="left:131px;top:640px" width="8" height="5" viewBox="0 0 8 5" ><path d="M0.3 0.5 H7.7 L4 4.5 Z" fill="#f0f0f0"/></svg>
<div style="left:143px;top:585px;width:52px;height:65px;background:#4f4f4f"></div>
<div style="left:143px;top:585px;width:1px;height:65px;background:#3e3e3e"></div>
<div style="left:148px;top:590px;width:43px;height:42px;background:#4a4a4a;border:1px solid #595959;border-top-color:#4d4d4d"></div>
<div style="left:150px;top:595px;width:39px;height:32px;background:#fff"></div>
<svg style="left:150px;top:594px" width="39" height="33" viewBox="0 0 39 33" ><path d="M19.6 30.9 C17.99 29.29 17.3 28.37 17.3 27.45 C17.3 26.185 19.255 26.07 19.6 27.565 C19.945 26.07 21.9 26.185 21.9 27.45 C21.9 28.37 21.21 29.29 19.6 30.9 Z" fill="#ec5f84" opacity="1"/><path d="M9.6 26.3 C8.41 25.11 7.9 24.43 7.9 23.75 C7.9 22.815 9.345 22.73 9.6 23.835 C9.855 22.73 11.3 22.815 11.3 23.75 C11.3 24.43 10.79 25.11 9.6 26.3 Z" fill="#ec5f84" opacity="1"/><path d="M27 28.4 C25.74 27.14 25.2 26.42 25.2 25.7 C25.2 24.71 26.73 24.62 27 25.79 C27.27 24.62 28.8 24.71 28.8 25.7 C28.8 26.42 28.26 27.14 27 28.4 Z" fill="#ec5f84" opacity="1"/></svg>
<div style="left:149px;top:591px;width:14px;height:12px;background:#4a4a4a"></div>
<span class="t" style="left:152.5px;top:592.5px;font-size:10px;font-weight:bold;color:#f4f4f4">4</span>
<span class="t" style="left:166px;top:637px;font-size:11px;color:#ececec">0.2</span>
<svg style="left:183px;top:640px" width="8" height="5" viewBox="0 0 8 5" ><path d="M0.3 0.5 H7.7 L4 4.5 Z" fill="#f0f0f0"/></svg>
<div style="left:195px;top:585px;width:52px;height:65px;background:#4f4f4f"></div>
<div style="left:195px;top:585px;width:1px;height:65px;background:#3e3e3e"></div>
<div style="left:200px;top:590px;width:43px;height:42px;background:#4a4a4a;border:1px solid #595959;border-top-color:#4d4d4d"></div>
<div style="left:202px;top:595px;width:39px;height:32px;background:#fff"></div>
<svg style="left:202px;top:594px" width="39" height="33" viewBox="0 0 39 33" ><path d="M19.6 30.9 C17.99 29.29 17.3 28.37 17.3 27.45 C17.3 26.185 19.255 26.07 19.6 27.565 C19.945 26.07 21.9 26.185 21.9 27.45 C21.9 28.37 21.21 29.29 19.6 30.9 Z" fill="#ec5f84" opacity="1"/><path d="M9.6 26.3 C8.41 25.11 7.9 24.43 7.9 23.75 C7.9 22.815 9.345 22.73 9.6 23.835 C9.855 22.73 11.3 22.815 11.3 23.75 C11.3 24.43 10.79 25.11 9.6 26.3 Z" fill="#ec5f84" opacity="1"/><path d="M27 28.4 C25.74 27.14 25.2 26.42 25.2 25.7 C25.2 24.71 26.73 24.62 27 25.79 C27.27 24.62 28.8 24.71 28.8 25.7 C28.8 26.42 28.26 27.14 27 28.4 Z" fill="#ec5f84" opacity="1"/><path d="M24 22.6 C22.88 21.48 22.4 20.84 22.4 20.2 C22.4 19.32 23.76 19.24 24 20.28 C24.24 19.24 25.6 19.32 25.6 20.2 C25.6 20.84 25.12 21.48 24 22.6 Z" fill="#ec5f84" opacity="1"/></svg>
<div style="left:201px;top:591px;width:14px;height:12px;background:#4a4a4a"></div>
<span class="t" style="left:204.5px;top:592.5px;font-size:10px;font-weight:bold;color:#f4f4f4">5</span>
<span class="t" style="left:218px;top:637px;font-size:11px;color:#ececec">0.2</span>
<svg style="left:235px;top:640px" width="8" height="5" viewBox="0 0 8 5" ><path d="M0.3 0.5 H7.7 L4 4.5 Z" fill="#f0f0f0"/></svg>
<div style="left:247px;top:585px;width:52px;height:65px;background:#4f4f4f"></div>
<div style="left:247px;top:585px;width:1px;height:65px;background:#3e3e3e"></div>
<div style="left:252px;top:590px;width:43px;height:42px;background:#4a4a4a;border:1px solid #595959;border-top-color:#4d4d4d"></div>
<div style="left:254px;top:595px;width:39px;height:32px;background:#fff"></div>
<svg style="left:254px;top:594px" width="39" height="33" viewBox="0 0 39 33" ><path d="M19.6 30.9 C17.99 29.29 17.3 28.37 17.3 27.45 C17.3 26.185 19.255 26.07 19.6 27.565 C19.945 26.07 21.9 26.185 21.9 27.45 C21.9 28.37 21.21 29.29 19.6 30.9 Z" fill="#ec5f84" opacity="1"/><path d="M9.6 26.3 C8.41 25.11 7.9 24.43 7.9 23.75 C7.9 22.815 9.345 22.73 9.6 23.835 C9.855 22.73 11.3 22.815 11.3 23.75 C11.3 24.43 10.79 25.11 9.6 26.3 Z" fill="#ec5f84" opacity="1"/><path d="M27 28.4 C25.74 27.14 25.2 26.42 25.2 25.7 C25.2 24.71 26.73 24.62 27 25.79 C27.27 24.62 28.8 24.71 28.8 25.7 C28.8 26.42 28.26 27.14 27 28.4 Z" fill="#ec5f84" opacity="1"/><path d="M24 22.6 C22.88 21.48 22.4 20.84 22.4 20.2 C22.4 19.32 23.76 19.24 24 20.28 C24.24 19.24 25.6 19.32 25.6 20.2 C25.6 20.84 25.12 21.48 24 22.6 Z" fill="#ec5f84" opacity="1"/><path d="M15.5 23.7 C13.89 22.09 13.2 21.17 13.2 20.25 C13.2 18.985 15.155 18.87 15.5 20.365 C15.845 18.87 17.8 18.985 17.8 20.25 C17.8 21.17 17.11 22.09 15.5 23.7 Z" fill="#ec5f84" opacity="1"/></svg>
<div style="left:253px;top:591px;width:14px;height:12px;background:#4a4a4a"></div>
<span class="t" style="left:256.5px;top:592.5px;font-size:10px;font-weight:bold;color:#f4f4f4">6</span>
<span class="t" style="left:270px;top:637px;font-size:11px;color:#ececec">0.2</span>
<svg style="left:287px;top:640px" width="8" height="5" viewBox="0 0 8 5" ><path d="M0.3 0.5 H7.7 L4 4.5 Z" fill="#f0f0f0"/></svg>
<div style="left:300px;top:585px;width:51px;height:65px;background:#596678"></div>
<div style="left:299px;top:585px;width:1px;height:65px;background:#3e3e3e"></div>
<div style="left:304px;top:590px;width:43px;height:42px;background:#4b4b4b;outline:1px solid #e8ecf4;outline-offset:1px"></div>
<div style="left:306px;top:595px;width:39px;height:32px;background:#fff"></div>
<svg style="left:306px;top:594px" width="39" height="33" viewBox="0 0 39 33" ><path d="M19.6 30.9 C17.99 29.29 17.3 28.37 17.3 27.45 C17.3 26.185 19.255 26.07 19.6 27.565 C19.945 26.07 21.9 26.185 21.9 27.45 C21.9 28.37 21.21 29.29 19.6 30.9 Z" fill="#ec5f84" opacity="1"/><path d="M9.6 26.3 C8.41 25.11 7.9 24.43 7.9 23.75 C7.9 22.815 9.345 22.73 9.6 23.835 C9.855 22.73 11.3 22.815 11.3 23.75 C11.3 24.43 10.79 25.11 9.6 26.3 Z" fill="#ec5f84" opacity="1"/><path d="M27 28.4 C25.74 27.14 25.2 26.42 25.2 25.7 C25.2 24.71 26.73 24.62 27 25.79 C27.27 24.62 28.8 24.71 28.8 25.7 C28.8 26.42 28.26 27.14 27 28.4 Z" fill="#ec5f84" opacity="1"/><path d="M24 22.6 C22.88 21.48 22.4 20.84 22.4 20.2 C22.4 19.32 23.76 19.24 24 20.28 C24.24 19.24 25.6 19.32 25.6 20.2 C25.6 20.84 25.12 21.48 24 22.6 Z" fill="#ec5f84" opacity="1"/><path d="M15.5 23.7 C13.89 22.09 13.2 21.17 13.2 20.25 C13.2 18.985 15.155 18.87 15.5 20.365 C15.845 18.87 17.8 18.985 17.8 20.25 C17.8 21.17 17.11 22.09 15.5 23.7 Z" fill="#ec5f84" opacity="1"/><path d="M31 20.6 C29.04 18.64 28.2 17.52 28.2 16.4 C28.2 14.86 30.58 14.72 31 16.54 C31.42 14.72 33.8 14.86 33.8 16.4 C33.8 17.52 32.96 18.64 31 20.6 Z" fill="#ec5f84" opacity="1"/></svg>
<div style="left:305px;top:591px;width:14px;height:12px;background:#4a4a4a"></div>
<span class="t" style="left:308.5px;top:592.5px;font-size:10px;font-weight:bold;color:#f4f4f4">7</span>
<span class="t" style="left:322px;top:637px;font-size:11px;color:#ececec">0.2</span>
<svg style="left:339px;top:640px" width="8" height="5" viewBox="0 0 8 5" ><path d="M0.3 0.5 H7.7 L4 4.5 Z" fill="#f0f0f0"/></svg>
<div style="left:351px;top:585px;width:1px;height:65px;background:#3e3e3e"></div>
<div style="left:0px;top:651px;width:283px;height:19px;background:#4a4a4a"></div>
<div style="left:17px;top:651px;width:1px;height:19px;background:#363636"></div>
<span class="t cj" style="left:28px;top:654px;color:#ececec;letter-spacing:-0.2px">永远</span>
<svg style="left:67px;top:659px" width="8" height="6" viewBox="0 0 8 6" ><path d="M0.3 0.5 H7.7 L4 5 Z" fill="#9c9c9c"/></svg>
<div style="left:78px;top:651px;width:1px;height:19px;background:#363636"></div>
<svg style="left:85px;top:657px" width="16" height="10" viewBox="0 0 16 10" ><path d="M7.5 0.5 V9.5 L0.5 5 Z M15.5 0.5 V9.5 L8.5 5 Z" fill="#9e9e9e"/></svg>
<svg style="left:116px;top:657px" width="10" height="10" viewBox="0 0 10 10" ><path d="M9.5 0.5 V9.5 L0.5 5 Z" fill="#9e9e9e"/></svg>
<svg style="left:147px;top:657px" width="10" height="10" viewBox="0 0 10 10" ><path d="M0.5 0.5 V9.5 L9.5 5 Z" fill="#9e9e9e"/></svg>
<svg style="left:173px;top:657px" width="16" height="10" viewBox="0 0 16 10" ><path d="M0.5 0.5 V9.5 L7.5 5 Z M8.5 0.5 V9.5 L15.5 5 Z" fill="#9e9e9e"/></svg>
<div style="left:196px;top:651px;width:1px;height:19px;background:#363636"></div>
<svg style="left:203px;top:656px" width="14" height="11" viewBox="0 0 14 11" ><circle cx="2" cy="1.8" r="1.2" fill="#8a8a8a"/><circle cx="5" cy="4" r="1.7" fill="#a4a4a4"/><path d="M6.5 4.6 L12.6 8.4 L10.8 10.4 L5.6 6.6 Z" fill="#bcbcbc"/><circle cx="10.6" cy="7.8" r="2.5" fill="#e2e2e2"/></svg>
<svg style="left:234px;top:656px" width="11" height="11" viewBox="0 0 11 11" ><path d="M0.3 0.5 H10 V10.8 H0.3 Z" fill="#d2d2d2"/><path d="M0 5.6 H5.2 V11 H0 Z" fill="#454545"/><path d="M0.3 6 H4.8 V10.8" fill="none" stroke="#c4c4c4" stroke-width="0.9"/></svg>
<svg style="left:262px;top:655px" width="12" height="13" viewBox="0 0 12 13" ><path d="M4 1.3 H8 M0.7 3.2 H11.3" stroke="#dedede" stroke-width="1.5" fill="none"/><path d="M1.6 4.4 H10.4 L9.7 12.2 H2.3 Z" fill="#cfcfcf"/><path d="M3.9 5.4 V11.2 M6 5.4 V11.2 M8.1 5.4 V11.2" stroke="#484848" stroke-width="1"/></svg>
<div style="left:222px;top:651px;width:34px;height:17px;border:1px solid #d43a3c"></div>
<svg style="left:60px;top:562px" width="275" height="24" viewBox="0 0 275 24" ><path d="M4 15.2 L252 9 L251 5 L268 13 L253 20.5 L253 17.5 L4 15.8 Z" fill="#ee3333"/></svg>
</body></html>
